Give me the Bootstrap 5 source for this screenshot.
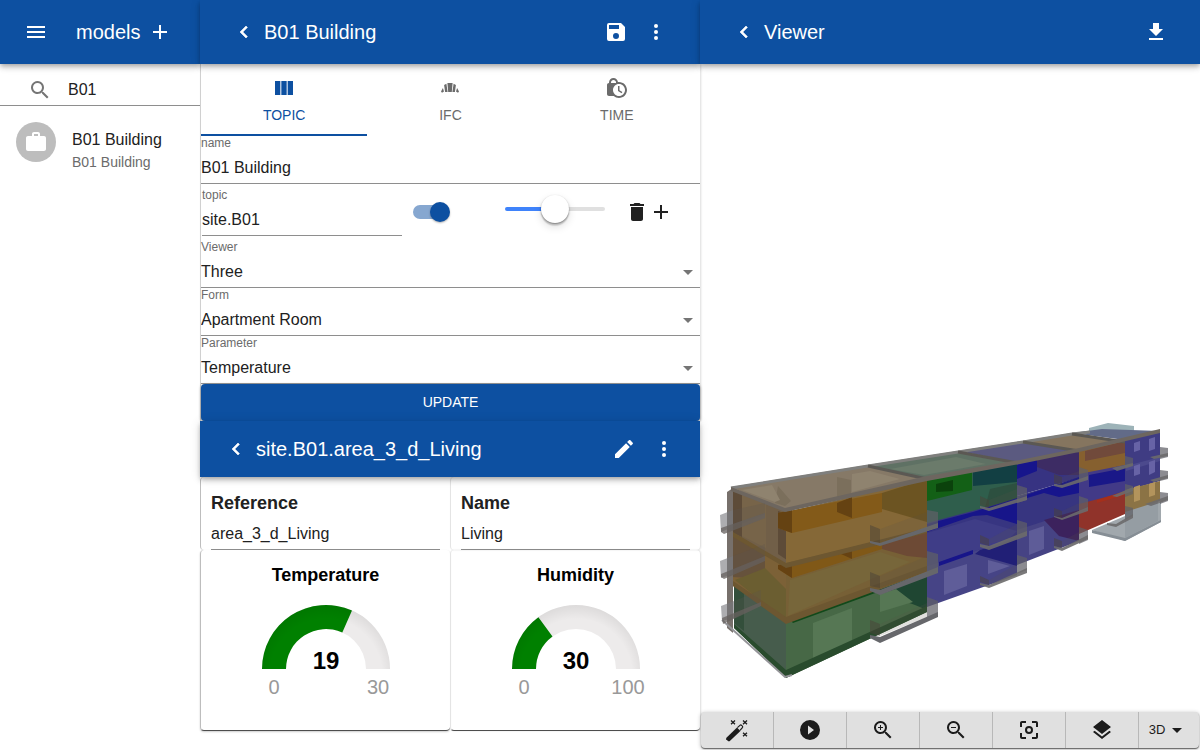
<!DOCTYPE html>
<html lang="en">
<head>
<meta charset="utf-8">
<meta name="viewport" content="width=device-width, initial-scale=1">
<title>Models</title>
<link href="https://cdn.jsdelivr.net/npm/bootstrap@5.3.0/dist/css/bootstrap.min.css" rel="stylesheet">
<style>
  :root { --brand: #0d50a1; --ink: #212121; --muted: #6b6b6b; }
  body { font-family: "Liberation Sans", Arial, sans-serif; font-size: 16px; line-height: 24px; color: var(--ink); background: #fff; }
  svg { display: block; fill: currentColor; }
  .ico { width: 24px; height: 24px; flex: none; }
  .app-bar { height: 64px; background: var(--brand); color: #fff; position: relative; z-index: 2;
    box-shadow: 0 2px 4px -1px rgba(0,0,0,.2), 0 4px 5px rgba(0,0,0,.14), 0 1px 10px rgba(0,0,0,.12); }
  .sub-bar { height: 56px; }
  .bar-title { font-size: 20px; line-height: 32px; font-weight: 400; margin: 0; }
  .bar-title.menu-title { margin-left: 20px; }
  .icon-btn { width: 40px; height: 40px; padding: 8px; border: 0; background: none; color: inherit; flex: none; }
  .icon-btn.tight { width: 24px; height: 24px; padding: 0; }
  .back-btn svg { stroke: currentColor; stroke-width: .6; }

  .line-input { border: 0; border-radius: 0; background: none; color: var(--ink); outline: 0; width: 100%; padding: 0; appearance: none; }
  .search-row { height: 42px; padding: 10px 0 0 28px; gap: 16px; border-bottom: 1px solid #8e8e8e; }
  .search-row .ico { color: #757575; }
  .avatar { width: 40px; height: 40px; background: #bdbdbd; color: #fff; }
  .model-link { padding: 16px; gap: 16px; color: inherit; text-decoration: none; }
  .model-text { padding-top: 6px; }
  .model-sub { font-size: 14px; line-height: 20px; color: var(--muted); }

  .edit-form { border-left: 1px solid #d0d0d0; box-shadow: 1px 0 2px rgba(0,0,0,.14); }
  .tab-btn { height: 72px; border: 0; border-bottom: 2px solid transparent; background: none; color: var(--muted); font-size: 14px; line-height: 24px; padding: 12px 0 4px; gap: 3px; }
  .tab-btn.active { color: var(--brand); border-color: var(--brand); }
  .line-field { height: 48px; border-bottom: 1px solid #8e8e8e; position: relative; }
  .line-field label { display: block; font-size: 12px; line-height: 14px; color: var(--muted); }
  .line-field .line-input { display: block; height: 33px; padding-top: 2px; }
  .line-field .caret { position: absolute; right: 0; bottom: 3px; color: #757575; pointer-events: none; }
  .topic-row { height: 56px; padding-left: 1px; }
  .topic-field { width: 200px; margin-right: 11px; }
  .toggle { appearance: none; width: 37px; height: 20px; margin: 0 55px 0 0; position: relative; }
  .toggle::before { content: ""; position: absolute; inset: 3px 3px 3px 0; border-radius: 7px; background: #86a7d0; }
  .toggle::after { content: ""; position: absolute; right: 0; top: 0; width: 20px; height: 20px; border-radius: 50%; background: var(--brand); box-shadow: 0 1px 2px rgba(0,0,0,.3); }
  .slider { appearance: none; width: 100px; height: 4px; border-radius: 2px; margin: 0 20px 6px 0; }
  .slider::-webkit-slider-thumb { appearance: none; width: 28px; height: 28px; border-radius: 50%; background: #fff; box-shadow: 0 3px 1px rgba(0,0,0,.1), 0 4px 8px rgba(0,0,0,.13), 0 1px 2px rgba(0,0,0,.4); }
  .update-btn { height: 37px; border: 0; border-radius: 4px; background: var(--brand); color: #fff; font-size: 14px; line-height: 24px; padding: 0 0 2px; box-shadow: 0 1px 3px rgba(0,0,0,.5); }

  .paper { border-left: 1px solid #bdbdbd; border-radius: 4px; }
  .col-6:nth-child(even) .paper { border-left-color: #e4e4e4; box-shadow: 1px 0 2px rgba(0,0,0,.14); }
  .paper-field { height: 73px; padding: 10px; padding-bottom: 0; }
  .paper-field label, .gauge-title { display: block; font-size: 18px; line-height: 32px; font-weight: 700; margin: 0; }
  .paper-field .line-input { height: 31px; border-bottom: 1px solid #8e8e8e; }
  .paper.paper-gauge { height: 181px; padding-top: 9px; border-bottom: 1px solid #4d4d4d; box-shadow: 0 1px 2px rgba(0,0,0,.2); }
  .gauge-title { color: #000; }
  .gauge { width: 160px; height: 120px; margin: 0 auto; }

  .app-shell { min-height: 100vh; }
  .model-view { padding-bottom: 12px; }
  .tool-bar { height: 36px; margin: 0 1px 2px; border-radius: 4px; overflow: hidden; background: #e0e0e0; box-shadow: 0 1px 1px #666, 0 1px 4px rgba(0,0,0,.3); }
  .tool { flex: 6 1 0; border: 0; border-right: 1px solid #b8b8b8; background: none; padding: 0; color: #1c1c1c; font-size: 13px; }
  .tool:last-child { flex-grow: 5; border-right: 0; }
</style>
</head>
<body>
<div class="app-shell row g-0">

  <nav class="col-2 d-flex flex-column" aria-label="Models">
    <header class="app-bar d-flex align-items-center ps-3">
      <button class="icon-btn" aria-label="Menu"><svg class="ico" viewBox="0 0 24 24"><path d="M3 6h18v2H3zM3 11h18v2H3zM3 16h18v2H3z"/></svg></button>
      <h1 class="bar-title menu-title">models</h1>
      <button class="icon-btn" aria-label="Add model"><svg class="ico" viewBox="0 0 24 24"><path d="M19 13h-6v6h-2v-6H5v-2h6V5h2v6h6z"/></svg></button>
    </header>
    <div class="search-row d-flex align-items-center">
      <label for="search"><svg class="ico" viewBox="0 0 24 24"><path d="M15.5 14h-.79l-.28-.27A6.5 6.5 0 1 0 13.73 14.43l.27.28v.79l5 5 1.5-1.5zM9.5 14a4.5 4.5 0 1 1 0-9 4.5 4.5 0 0 1 0 9z"/></svg></label>
      <input id="search" class="line-input" type="text" value="B01" aria-label="Search">
    </div>
    <a href="#" class="model-link d-flex align-items-start">
      <span class="avatar rounded-circle d-flex align-items-center justify-content-center flex-shrink-0"><svg class="ico" viewBox="0 0 24 24"><path d="M20 6h-4V4c0-1.11-.89-2-2-2h-4c-1.11 0-2 .89-2 2v2H4c-1.11 0-1.99.89-1.99 2L2 19c0 1.11.89 2 2 2h16c1.11 0 2-.89 2-2V8c0-1.11-.89-2-2-2zm-6 0h-4V4h4v2z"/></svg></span>
      <span class="model-text text-nowrap"><span class="d-block">B01 Building</span><span class="d-block model-sub">B01 Building</span></span>
    </a>
  </nav>

  <main class="col-5 d-flex flex-column">
    <header class="app-bar d-flex align-items-center px-4">
      <button class="icon-btn back-btn" aria-label="Back"><svg class="ico" viewBox="0 0 24 24"><path d="M15.41 16.58 10.83 12l4.58-4.59L14 6l-6 6 6 6z"/></svg></button>
      <h2 class="bar-title me-auto">B01 Building</h2>
      <button class="icon-btn" aria-label="Save"><svg class="ico" viewBox="0 0 24 24"><path d="M15 9H5V5h10M12 19a3 3 0 1 1 0-6 3 3 0 0 1 0 6M17 3H5a2 2 0 0 0-2 2v14a2 2 0 0 0 2 2h14a2 2 0 0 0 2-2V7z" fill-rule="evenodd"/></svg></button>
      <button class="icon-btn" aria-label="More"><svg class="ico" viewBox="0 0 24 24"><circle cx="12" cy="6" r="2"/><circle cx="12" cy="12" r="2"/><circle cx="12" cy="18" r="2"/></svg></button>
    </header>

    <form class="edit-form">
      <div class="d-flex" role="tablist">
        <button type="button" role="tab" class="tab-btn active col d-flex flex-column align-items-center"><svg class="ico" viewBox="0 0 24 24"><path d="M14.67 5v14H9.33V5zM15.67 19H21V5h-5.33zM8.33 19V5H3v14z"/></svg>TOPIC</button>
        <button type="button" role="tab" class="tab-btn col d-flex flex-column align-items-center"><svg class="ico" viewBox="0 0 24 24"><path d="M9.4 7h5.2L13.8 16h-3.6zM6.1 9l2.3-1.2L9.6 16H7.1zM17.9 9l-2.3-1.2L14.4 16h2.5zM4.9 12 3 15.4l1 1.3 2-1.3zM19.1 12l1.9 3.4-1 1.3-2-1.3z"/></svg>IFC</button>
        <button type="button" role="tab" class="tab-btn col d-flex flex-column align-items-center"><svg class="ico" viewBox="0 0 24 24"><path d="M14.5 14.2l2.9 1.7-.8 1.3L13 15v-5h1.5v4.2zM22 14c0 4.41-3.59 8-8 8-2.02 0-3.86-.76-5.27-2H4c-1.15 0-2-.85-2-2V9c0-1.12.89-1.96 2-2v-.5C4 4.01 6.01 2 8.5 2c2.34 0 4.24 1.79 4.46 4.08.34-.05.69-.08 1.04-.08 4.41 0 8 3.59 8 8zM6 7h5v-.74C10.88 4.99 9.8 4 8.5 4 7.12 4 6 5.12 6 6.5V7zm14 7c0-3.31-2.69-6-6-6s-6 2.69-6 6 2.69 6 6 6 6-2.69 6-6z"/></svg>TIME</button>
      </div>
      <div class="line-field"><label for="name">name</label><input id="name" class="line-input" type="text" value="B01 Building"></div>
      <div class="topic-row d-flex align-items-center">
        <div class="line-field topic-field"><label for="topic">topic</label><input id="topic" class="line-input" type="text" value="site.B01"></div>
        <input class="toggle" type="checkbox" role="switch" checked aria-label="Show topic">
        <input class="slider" type="range" value="50" aria-label="Opacity" style="background:linear-gradient(90deg,#3f83fb 50%,#e0e0e0 50%)">
        <button type="button" class="icon-btn tight" aria-label="Delete topic"><svg class="ico" viewBox="0 0 24 24"><path d="M6 19c0 1.1.9 2 2 2h8c1.1 0 2-.9 2-2V7H6zM19 4h-3.5l-1-1h-5l-1 1H5v2h14z"/></svg></button>
        <button type="button" class="icon-btn tight" aria-label="Add topic"><svg class="ico" viewBox="0 0 24 24"><path d="M19 13h-6v6h-2v-6H5v-2h6V5h2v6h6z"/></svg></button>
      </div>
      <div class="line-field"><label for="viewer">Viewer</label><select id="viewer" class="line-input"><option>Three</option></select><svg class="ico caret" viewBox="0 0 24 24"><path d="m7 10 5 5 5-5z"/></svg></div>
      <div class="line-field"><label for="form">Form</label><select id="form" class="line-input"><option>Apartment Room</option></select><svg class="ico caret" viewBox="0 0 24 24"><path d="m7 10 5 5 5-5z"/></svg></div>
      <div class="line-field"><label for="parameter">Parameter</label><select id="parameter" class="line-input"><option>Temperature</option></select><svg class="ico caret" viewBox="0 0 24 24"><path d="m7 10 5 5 5-5z"/></svg></div>
      <button type="button" class="update-btn d-block w-100">UPDATE</button>
    </form>

    <header class="app-bar sub-bar d-flex align-items-center px-3">
      <button class="icon-btn back-btn" aria-label="Back"><svg class="ico" viewBox="0 0 24 24"><path d="M15.41 16.58 10.83 12l4.58-4.59L14 6l-6 6 6 6z"/></svg></button>
      <h2 class="bar-title me-auto">site.B01.area_3_d_Living</h2>
      <button class="icon-btn" aria-label="Edit"><svg class="ico" viewBox="0 0 24 24"><path d="M20.71 7.04c.39-.39.39-1.04 0-1.41l-2.34-2.34c-.37-.39-1.02-.39-1.41 0l-1.84 1.83 3.75 3.75M3 17.25V21h3.75L17.81 9.93l-3.75-3.75z"/></svg></button>
      <button class="icon-btn" aria-label="More"><svg class="ico" viewBox="0 0 24 24"><circle cx="12" cy="6" r="2"/><circle cx="12" cy="12" r="2"/><circle cx="12" cy="18" r="2"/></svg></button>
    </header>

    <section class="row g-0">
      <div class="col-6">
        <div class="paper paper-field"><label for="reference">Reference</label><input id="reference" class="line-input" type="text" value="area_3_d_Living"></div>
      </div>
      <div class="col-6">
        <div class="paper paper-field"><label for="room">Name</label><input id="room" class="line-input" type="text" value="Living"></div>
      </div>
      <div class="col-6">
        <div class="paper paper-gauge text-center">
          <h3 class="gauge-title">Temperature</h3>
          <svg class="gauge" viewBox="0 0 160 120">
            <defs><radialGradient id="rim" gradientUnits="userSpaceOnUse" cx="80" cy="84" r="70"><stop offset=".8" stop-color="#000" stop-opacity="0"/><stop offset="1" stop-color="#000" stop-opacity=".07"/></radialGradient></defs>
            <path fill="#edebeb" d="M16 78a64 64 0 0 1 128 0h-24a40 40 0 0 0-80 0z"/>
            <path fill="#008000" d="M16 78A64 64 0 0 1 106 19.5L96.3 41.5A40 40 0 0 0 40 78z"/>
            <path fill="url(#rim)" d="M16 78a64 64 0 0 1 128 0h-24a40 40 0 0 0-80 0z"/>
            <text x="80" y="78" text-anchor="middle" font-size="24" font-weight="700" fill="#000">19</text>
            <text x="28" y="103" text-anchor="middle" font-size="20" fill="#999">0</text>
            <text x="132" y="103" text-anchor="middle" font-size="20" fill="#999">30</text>
          </svg>
        </div>
      </div>
      <div class="col-6">
        <div class="paper paper-gauge text-center">
          <h3 class="gauge-title">Humidity</h3>
          <svg class="gauge" viewBox="0 0 160 120">
            <path fill="#edebeb" d="M16 78a64 64 0 0 1 128 0h-24a40 40 0 0 0-80 0z"/>
            <path fill="#008000" d="M16 78A64 64 0 0 1 42.4 26.2L56.5 45.6A40 40 0 0 0 40 78z"/>
            <path fill="url(#rim)" d="M16 78a64 64 0 0 1 128 0h-24a40 40 0 0 0-80 0z"/>
            <text x="80" y="78" text-anchor="middle" font-size="24" font-weight="700" fill="#000">30</text>
            <text x="28" y="103" text-anchor="middle" font-size="20" fill="#999">0</text>
            <text x="132" y="103" text-anchor="middle" font-size="20" fill="#999">100</text>
          </svg>
        </div>
      </div>
    </section>
  </main>

  <section class="col-5 d-flex flex-column" aria-label="Viewer">
    <header class="app-bar d-flex align-items-center px-4">
      <button class="icon-btn back-btn" aria-label="Back"><svg class="ico" viewBox="0 0 24 24"><path d="M15.41 16.58 10.83 12l4.58-4.59L14 6l-6 6 6 6z"/></svg></button>
      <h2 class="bar-title me-auto">Viewer</h2>
      <button class="icon-btn" aria-label="Download"><svg class="ico" viewBox="0 0 24 24"><path d="M5 20h14v-2H5M19 9h-4V3H9v6H5l7 7z"/></svg></button>
    </header>
    <div class="model-view flex-grow-1 d-flex align-items-end">
      <svg class="w-100" viewBox="700 410 500 290" role="img" aria-label="B01 Building model">
        <!-- far stair tower and grey base -->
        <path fill="#9db3b8" d="M1089 428l19-5 26 3v5l-22 6-23-5z"/>
        <path fill="#a1a8ad" d="M1092 530l33-14 36-14v20l-36 19z"/>
        <path fill="#868e95" d="M1092 530l33 8 36-18v2l-36 19-33-8z"/>
        <path fill="#959da3" d="M1125 508l33-8v21l-33 17z"/>
        <!-- section E -->
        <path fill="#3f3c83" d="M1125 440l35-9v50l-35 10z"/>
        <path fill="#4c4a8d" d="M1126 466l34-9v4l-34 10z"/>
        <path fill="#6763a6" d="M1134 443l6-2v9l-6 2zM1149 439l6-2v12l-6 2zM1134 466l6-2v10l-6 2zM1149 462l6-2v12l-6 3z"/>
        <path fill="#8b7345" d="M1125 490l35-9v20l-35 11z"/>
        <path fill="#b3945c" d="M1134 487l6-2v15l-6 2zM1149 484l6-2v13l-6 2z"/>
        <!-- section D -->
        <path fill="#86602f" d="M1079 450l46-10v26l-46 12z"/>
        <path fill="#714a3b" d="M1085 451l40-10v12l-40 8z"/>
        <path fill="#423a87" d="M1079 474l46-9v28l-46 12z"/>
        <path fill="#1a1888" d="M1089 475l36-7v13l-36 6z"/>
        <path fill="#90332a" d="M1079 504l46-12v22l-46 20z"/>
        <path fill="#a52f1b" d="M1097 500l28-9v4l-28 8z"/>
        <!-- section C -->
        <path fill="#373382" d="M1017 463l62-13v28l-62 18z"/>
        <path fill="#17158c" d="M1017 463l20-4v12l-20 8z"/>
        <path fill="#3d2c64" d="M1037 459l42-9v25l-20 0-22-8z"/>
        <path fill="#373580" d="M1017 496l62-18v34l-62 20z"/>
        <path fill="#17158c" d="M1020 497l59-20v16l-20 4-15-4-27 8z"/>
        <path fill="#464384" d="M1017 530l62-20v31l-62 24z"/>
        <path fill="#3c225d" d="M1044 520l35-10v31l-20-5z"/>
        <path fill="#5e5c98" d="M1029 531l15-5v23l-15 6z"/>
        <!-- section B -->
        <path fill="#2f5e4c" d="M927 480l90-17v38l-90 24z"/>
        <path fill="#136016" d="M927 480l45-9v19l-45 11z"/>
        <path fill="#0b420c" d="M936 484l17-4v11l-17 1z"/>
        <path fill="#123f43" d="M973 472l44-9v19l-44 4z"/>
        <path fill="#2d5040" d="M990 489l27-6v17l-32 8z"/>
        <path fill="#373581" d="M927 523l90-24v40l-90 28z"/>
        <path fill="#17158a" d="M927 524l46-12 44-14v26l-30-9-14 1-46 16z"/>
        <path fill="#3f3d87" d="M927 533l48-14 42 12-10 10-80 25z"/>
        <path fill="#464486" d="M927 566l90-28v37l-90 32z"/>
        <path fill="#211f76" d="M980 550l37-12v28l-42-12z"/>
        <path fill="#17158a" d="M939 562l34-12v4l-34 12z"/>
        <path fill="#5f5d99" d="M944 571l23-7v22l-23 9zM988 560l22 6-22 8z"/>
        <!-- section A, gable side -->
        <path fill="#77706b" d="M727 492l6-4v145l-6-5z"/>
        <path fill="#715f48" d="M733 488l53 22v54l-53-28z"/>
        <path fill="#5d4b38" d="M733 488l9 5v44l-9-4zM778 511l9 3v46l-9-6z"/>
        <path fill="#776449" d="M742 494l24 10v44l-24-12z"/>
        <path fill="#7c6137" d="M733 536l53 28v58l-53-36z"/>
        <path fill="#66523c" d="M733 536l32 18v25l-32-2z"/>
        <path fill="#6b5e31" d="M735 580l30-12 22 22v32z"/>
        <path fill="#465c4c" d="M734 584l53 38v56l-53-50z"/>
        <path fill="#334f3b" d="M734 585l10 8v38l-10-8z"/>
        <!-- section A, long side -->
        <path fill="#856837" d="M786 512l141-33v52l-141 34z"/>
        <path fill="#835a19" d="M778 513l104-20v19l-90 21-14-5z"/>
        <path fill="#654212" d="M778 513l14-3v23l-14-5zM837 503l15-6v21l-15-6z"/>
        <path fill="#6c5422" d="M882 493l45-14v43l-45-13z"/>
        <path fill="#776036" d="M786 563l141-34v43l-141 50z"/>
        <path fill="#805817" d="M778 565l14-2 90-20v6l-90 29-14-9z"/>
        <path fill="#664212" d="M778 565l14-2v15l-14-9zM841 552l11-3v10l-11-5z"/>
        <path fill="#6d4a35" d="M882 541l45-11v28l-20-2-25-7z"/>
        <path fill="#77663a" d="M790 580l90-28 30 10-122 54z"/>
        <path fill="#476846" d="M786 622l141-50v40l-141 66z"/>
        <path fill="#1f4632" d="M876 591l51-19v38l-12-5z"/>
        <path fill="#11491a" d="M790 620l85-30 3 2-85 31z"/>
        <path fill="#567754" d="M813 623l39-15v39l-39 15zM880 594l16-5 17 13-33 10z"/>
        <path fill="#294b2d" d="M786 670l141-64v6l-141 66-52-50v-4z"/>
        <path fill="#6d5731" d="M786 563l141-35v5l-141 35-53-31v-5zM786 617l141-51v6l-141 52-53-38v-5z"/>
        <path fill="none" stroke="#949498" stroke-width="2" d="M722 620l63 57 7-2"/>
        <!-- roof -->
        <path fill="#867967" d="M731 487l137-22 59 14-142 32z"/>
        <path fill="#7b6f5c" d="M778 486l13 15-6 5-10-3zM837 477l14 3v17l-14 3z"/>
        <path fill="#8f836f" d="M742 490l30-5 8 15-5 2zM852 474l18-3 30 8-48 13z"/>
        <path fill="#5f7164" d="M868 465l90-14 62 12-93 17z"/>
        <path fill="#6b7b6b" d="M890 469l66-12 30 7-62 11z"/>
        <path fill="#5b5a80" d="M958 451l65-10 56 10-59 12z"/>
        <path fill="#85755f" d="M1023 441l49-8 53 8-46 10z"/>
        <path fill="#626b88" d="M1072 433l30-4 58 2-35 9z"/>
        <path fill="none" stroke="#7f7f7d" stroke-width="3" d="M731 488l137-22 90-14 65-10 49-8 18-2"/>
        <path fill="none" stroke="#5b5853" stroke-width="3" d="M868 466l59 13M958 452l60 11M1023 442l56 9M1072 434l53 8"/>
        <path fill="#6d665f" d="M731 487l54 21 142-32 93-16 59-12 81-19v4l-81 19-59 12-93 17-142 31-54-21z"/>
        <!-- balconies, gable side -->
        <path fill="#77777b" fill-opacity=".6" d="M720 515l13-5v17l-12 5zM720 561l13-5v18l-12 4zM721 606l13-5v17l-12 3z"/>
        <path fill="#5c5450" fill-opacity=".25" d="M733 510l32-7v11l-32 13zM733 556l32-12v15l-32 15zM734 601l27-11v14l-27 14z"/>
        <path fill="#66605d" fill-opacity=".75" d="M721 528l44-15v5l-41 16-3-2zM721 574l44-18v5l-41 18-3-2zM722 618l39-16v4l-38 18z"/>
        <!-- balconies, long side: parapet glass, returns, end rails, slabs -->
        <path fill="#5b5548" fill-opacity=".18" d="M880 529l47-17v15l-47 15zM880 576l47-20v15l-47 16zM880 624l47-21v14l-47 19zM989 500l28-11v12l-28 6zM989 539l28-15v13l-28 7zM989 580l28-16v12l-28 9zM1062 477l17-6v9l-17 5zM1062 511l17-8v9l-17 6zM1062 541l17-9v11l-17 6z"/>
        <path fill="#4a4238" fill-opacity=".5" d="M870 525l10 4v14l-10-2zM870 572l10 4v12l-10-2zM870 620l10 4v12l-10-3zM980 496l9 4v8l-9-3zM980 535l9 4v7l-9-3zM980 576l9 4v5l-9-3zM1054 474l8 3v8l-8-2zM1054 508l8 3v7l-8-2zM1054 538l8 3v7l-8-2z"/>
        <path fill="#606066" fill-opacity=".72" d="M927 510l11 2v15l-11 4zM927 551l11 3v15l-11 4zM927 597l11 4v13l-11 5zM1017 485l10 3v12l-10 3zM1017 520l10 3v11l-10 4zM1017 555l10 3v12l-10 4zM1079 467l9 3v9l-9 3zM1079 496l9 3v9l-9 4zM1079 527l9 3v10l-9 4zM1125 456l8 2v7l-8 2zM1125 484l8 2v8l-8 3zM1125 506l8 2v8l-8 4zM1160 447l8 1v9l-8 2zM1160 470l8 1v8l-8 2zM1160 492l8 1v8l-8 3z"/>
        <path fill="#66676b" d="M870 541l10 2 58-20v5l-58 18-10-3zM870 588l10 2 58-23v6l-58 22-10-4zM870 635l10 2 58-25v5l-58 26-10-5z"/>
        <path fill="#6b6a6c" fill-opacity=".9" d="M980 506l9 2 38-12v4l-38 11-9-3zM980 544l9 2 38-15v5l-38 14-9-3zM980 583l9 2 38-17v5l-38 15-9-3zM1054 484l8 1 26-9v4l-26 8-8-2zM1054 516l8 2 26-11v4l-26 9-8-3zM1054 546l8 2 26-13v4l-26 12-8-3zM1112 468l21-5v3l-16 5zM1112 496l21-9v4l-16 6zM1107 523l9 1 17-10v4l-17 9-9-2zM1150 457l18-4v3l-14 3zM1150 480l18-5v3l-14 4zM1145 504l23-8v4l-17 6z"/>
      </svg>
    </div>
    <div class="tool-bar d-flex align-items-stretch" role="toolbar" aria-label="View tools">
      <button class="tool d-flex align-items-center justify-content-center" aria-label="Effects"><svg class="ico" viewBox="0 0 24 24"><path d="M1.2 20 12 9.6 15.4 13 4.6 23.2H3.2L1.2 21.3z"/><path d="m12.4 9.6 2.8-2.5c.8-.7 3 1.4 2.4 2.3L15 12.4" fill="none" stroke="currentColor" stroke-width="1.2"/><path d="m6 2.5 4 3.8m0-3.8L6 6.3m12-3.8 4 3.8m0-3.8-4 3.8m0 8.4 4 3.6m0-3.6-4 3.6" fill="none" stroke="currentColor" stroke-width="1.3"/></svg></button>
      <button class="tool d-flex align-items-center justify-content-center" aria-label="Play"><svg class="ico" viewBox="0 0 24 24"><path d="M12 2a10 10 0 1 0 0 20 10 10 0 0 0 0-20zm-2 14.5v-9l6 4.5z" fill-rule="evenodd"/></svg></button>
      <button class="tool d-flex align-items-center justify-content-center" aria-label="Zoom in"><svg class="ico" viewBox="0 0 24 24"><path d="M15.5 14h-.79l-.28-.27A6.5 6.5 0 1 0 13.73 14.43l.27.28v.79l5 5 1.5-1.5zM9.5 14a4.5 4.5 0 1 1 0-9 4.5 4.5 0 0 1 0 9zM10 7H9v2H7v1h2v2h1v-2h2V9h-2z"/></svg></button>
      <button class="tool d-flex align-items-center justify-content-center" aria-label="Zoom out"><svg class="ico" viewBox="0 0 24 24"><path d="M15.5 14h-.79l-.28-.27A6.5 6.5 0 1 0 13.73 14.43l.27.28v.79l5 5 1.5-1.5zM9.5 14a4.5 4.5 0 1 1 0-9 4.5 4.5 0 0 1 0 9zM7 9h5v1H7z"/></svg></button>
      <button class="tool d-flex align-items-center justify-content-center" aria-label="Center"><svg class="ico" viewBox="0 0 24 24"><path d="M5 15H3v4c0 1.1.9 2 2 2h4v-2H5zM5 5h4V3H5c-1.1 0-2 .9-2 2v4h2zM19 3h-4v2h4v4h2V5c0-1.1-.9-2-2-2zM19 19h-4v2h4c1.1 0 2-.9 2-2v-4h-2z"/><circle cx="12" cy="12" r="3" fill="none" stroke="currentColor" stroke-width="2"/></svg></button>
      <button class="tool d-flex align-items-center justify-content-center" aria-label="Layers"><svg class="ico" viewBox="0 0 24 24"><path d="m12 18.54-7.38-5.73L3 14.07l9 7 9-7-1.63-1.27zM12 16l7.36-5.73L21 9l-9-7-9 7 1.63 1.27z"/></svg></button>
      <button class="tool d-flex align-items-center justify-content-center">3D<svg class="ico" viewBox="0 0 24 24"><path d="m7 10 5 5 5-5z"/></svg></button>
    </div>
  </section>
</div>
<script src="https://cdn.jsdelivr.net/npm/bootstrap@5.3.0/dist/js/bootstrap.bundle.min.js"></script>
</body>
</html>
